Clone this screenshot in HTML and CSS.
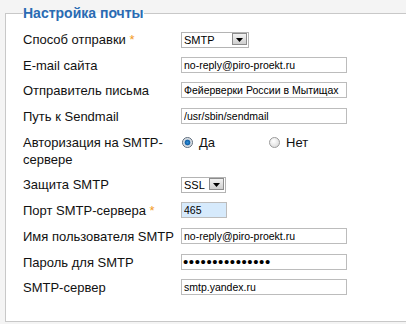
FILE: index.html
```html
<!DOCTYPE html>
<html lang="ru">
<head>
  <meta charset="UTF-8" />
  <title>Настройка почты</title>
  <link rel="stylesheet" href="styles.css">
</head>
<body>
  <fieldset class="mail-settings">
    <legend>Настройка почты</legend>

    <div class="rows">
      <label for="mailer">Способ отправки <span class="req">*</span></label>
      <div class="field">
        <span class="select">
          <select id="mailer"><option>SMTP</option><option>mail</option></select>
          <span class="arrow"><svg width="7" height="4" viewBox="0 0 7 4"><path d="M0 0h7L3.5 4z" fill="#000"/></svg></span>
        </span>
      </div>

      <label for="siteEmail">E-mail сайта</label>
      <div class="field"><input type="text" id="siteEmail" value="no-reply@piro-proekt.ru" /></div>

      <label for="sender">Отправитель письма</label>
      <div class="field"><input type="text" id="sender" value="Фейерверки России в Мытищах" /></div>

      <label for="sendmail">Путь к Sendmail</label>
      <div class="field"><input type="text" id="sendmail" value="/usr/sbin/sendmail" /></div>

      <label>Авторизация на SMTP-сервере</label>
      <div class="field radios">
        <label class="radio"><input type="radio" name="auth" checked /> Да</label>
        <label class="radio"><input type="radio" name="auth" /> Нет</label>
      </div>

      <label for="secure">Защита SMTP</label>
      <div class="field">
        <span class="select small">
          <select id="secure"><option>SSL</option><option>TLS</option></select>
          <span class="arrow"><svg width="7" height="4" viewBox="0 0 7 4"><path d="M0 0h7L3.5 4z" fill="#000"/></svg></span>
        </span>
      </div>

      <label for="port">Порт SMTP-сервера <span class="req">*</span></label>
      <div class="field"><input type="text" id="port" class="short" value="465" /></div>

      <label for="user">Имя пользователя SMTP</label>
      <div class="field"><input type="text" id="user" value="no-reply@piro-proekt.ru" /></div>

      <label for="pass">Пароль для SMTP</label>
      <div class="field"><input type="password" id="pass" value="secretpassword1" /></div>

      <label for="host">SMTP-сервер</label>
      <div class="field"><input type="text" id="host" value="smtp.yandex.ru" /></div>
    </div>
  </fieldset>
</body>
</html>
```

FILE: styles.css
```css
body {
  margin: 0;
  padding: 5px 0 0 5px;
  background: #f4f4f4;
  font-family: 'Liberation Sans', Arial, sans-serif;
  color: #111;
  overflow: hidden;
}

.mail-settings {
  margin: 0 -20px 0 0;
  padding: 10px 0 25px 17px;
  background: #fff;
  border: 1px solid #c8c8c8;
  min-width: 0;
}

legend {
  padding: 0;
  margin-left: 0;
  font-size: 14px;
  font-weight: bold;
  color: #2a6bb3;
  line-height: 16px;
}

.rows {
  display: grid;
  grid-template-columns: 158px 1fr;
  row-gap: 8.7px;
  font-size: 13px;
  line-height: 17px;
}

.req {
  color: #f39a1e;
}

.field {
  display: flex;
  align-items: flex-start;
  height: 17px;
}

input[type="text"], input[type="password"] {
  box-sizing: border-box;
  width: 166px;
  height: 16px;
  margin: 0;
  padding: 0 2px;
  border: 1px solid #bcbcbc;
  font-family: 'Liberation Sans', Arial, sans-serif;
  font-size: 10.5px;
  line-height: 14px;
  color: #000;
  background: #fff;
  outline: none;
}

input[type="password"] {
  font-size: 15px;
  letter-spacing: 0.6px;
  padding-left: 1px;
}

input.short {
  width: 46px;
  background: #d6eafc;
}

.select {
  position: relative;
  display: inline-block;
  width: 68px;
  height: 16px;
}

.select.small {
  width: 45px;
}

.select select {
  appearance: none;
  -webkit-appearance: none;
  box-sizing: border-box;
  width: 100%;
  height: 16px;
  margin: 0;
  padding: 0 2px;
  border: 1px solid #b4b4b4;
  border-radius: 0;
  background: #fff;
  font-family: 'Liberation Sans', Arial, sans-serif;
  font-size: 11px;
  color: #000;
  outline: none;
}

.arrow {
  position: absolute;
  right: 2px;
  top: 2px;
  width: 15px;
  height: 12px;
  box-sizing: border-box;
  border: 1px solid #8c8c8c;
  background: linear-gradient(#f2f2f2, #cfcfcf);
  display: flex;
  align-items: flex-end;
  justify-content: center;
  padding-bottom: 2px;
  pointer-events: none;
}

.radios {
  gap: 0;
}

.radio {
  display: flex;
  align-items: center;
  width: 87px;
  gap: 6px;
}

.radio input {
  appearance: none;
  -webkit-appearance: none;
  width: 11px;
  height: 11px;
  margin: 0 0 0 1px;
  border-radius: 50%;
  border: 1px solid #9a9a9a;
  background: radial-gradient(circle at 40% 35%, #fff, #d4d4d4);
  position: relative;
}

.radio input:checked {
  border-color: #5b6a7a;
  background: radial-gradient(circle, #2f8fd8 0, #0d5fa8 2.5px, #c9d2dc 3.2px, #f4f4f4 5px);
}
```
